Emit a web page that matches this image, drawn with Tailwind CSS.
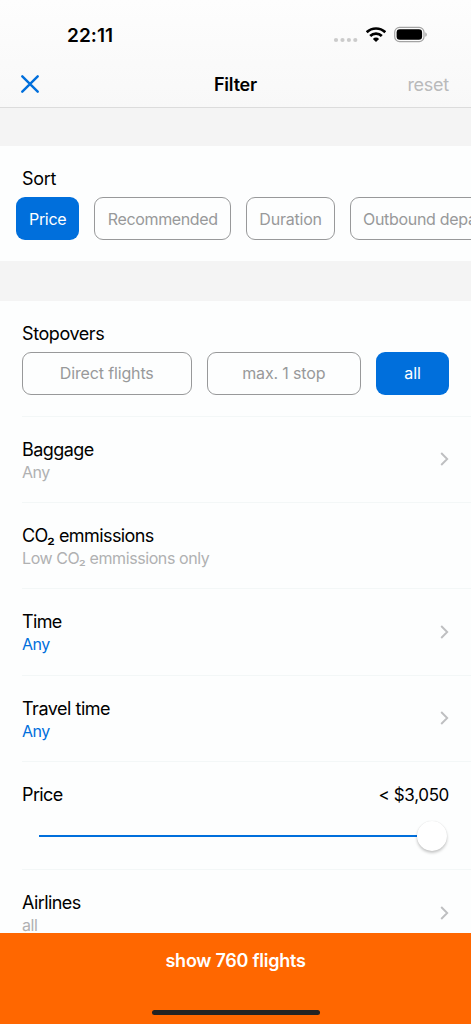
<!DOCTYPE html>
<html lang="en">
<head>
<meta charset="utf-8">
<meta name="viewport" content="width=device-width, initial-scale=1">
<title>Filter</title>
<script src="https://cdn.jsdelivr.net/npm/@tailwindcss/browser@4"></script>
</head>
<body class="h-[1024px] w-[471px] overflow-hidden bg-[#fdfefe] font-['Inter','Liberation_Sans',sans-serif] text-black">
<div class="flex h-[1024px] w-[471px] flex-col overflow-hidden">
  <header class="h-[108px] shrink-0 border-b border-[#dcdcdc] bg-linear-to-b from-[#fdfdfd] to-[#f8f8f8]">
    <div class="flex h-[61px] items-start justify-between pt-[24px] pr-[43px] pl-[67px]">
      <span class="text-[19px] leading-[23px] font-semibold tracking-[0.05px]">22:11</span>
      <div class="flex items-center">
        <svg class="mt-[10px] mr-[7px]" width="26" height="6" viewBox="0 0 26 6" fill="#cbcbcb"><circle cx="3" cy="3" r="2.1"/><circle cx="9.5" cy="3" r="2.1"/><circle cx="15.9" cy="3" r="2.1"/><circle cx="22.3" cy="3" r="2.1"/></svg>
        <svg class="mr-[8px]" width="20" height="21" viewBox="0 0 20 21"><g fill="none" stroke="#000" stroke-width="2.7"><path d="M.7 8.3a13.3 13.3 0 0 1 18.6 0"/><path d="M4.2 12a8.2 8.2 0 0 1 11.6 0"/></g><path d="M10 18 6.9 14.9a4.4 4.4 0 0 1 6.2 0z"/></svg>
        <svg width="34" height="21" viewBox="0 0 34 21"><rect x=".7" y="3.4" width="29.3" height="14.2" rx="4.8" fill="none" stroke="#a3a3a3" stroke-width="1.2"/><rect x="2.6" y="5.2" width="25.5" height="10.6" rx="3.2"/><path d="M31.3 8.2c2 .9 2 3.7 0 4.6z" fill="#a3a3a3"/></svg>
      </div>
    </div>
    <div class="grid h-[46px] grid-cols-3 items-center px-[22px]">
      <svg class="-ml-px" width="18" height="18" viewBox="0 0 18 18" fill="none" stroke="#006fdc" stroke-width="2.4" stroke-linecap="round"><path d="m1.3 1.3 15.4 15.4M16.7 1.3 1.3 16.7"/></svg>
      <h1 class="pt-px text-center text-[18px] leading-[22px] font-semibold tracking-[-0.2px]">Filter</h1>
      <span class="pt-px text-right text-[18px] leading-[22px] tracking-[-0.25px] text-[#b9babb]">reset</span>
    </div>
  </header>
  <div class="h-[38px] shrink-0 bg-[#f4f4f4]"></div>
  <section class="h-[115px] shrink-0 pt-[22px]">
    <h2 class="ml-[22px] text-[18px] leading-[22px] tracking-[-0.3px]">Sort</h2>
    <div class="mt-[7px] ml-[16px] flex w-[600px] gap-[15px] text-[16px] text-[#98999a]">
      <div class="flex h-[43px] w-[63.3px] shrink-0 items-center justify-center rounded-[9px] bg-[#006fdc] tracking-[-0.3px] text-white">Price</div>
      <div class="flex h-[43px] w-[136.9px] shrink-0 items-center justify-center rounded-[9px] border border-[#98999a] tracking-[-0.35px]">Recommended</div>
      <div class="flex h-[43px] w-[88.8px] shrink-0 items-center justify-center rounded-[9px] border border-[#98999a] tracking-[-0.2px]">Duration</div>
      <div class="flex h-[43px] w-[174px] shrink-0 items-center rounded-[9px] border border-[#98999a] pl-[12px] tracking-[-0.3px] whitespace-nowrap">Outbound departure</div>
    </div>
  </section>
  <div class="h-[39.5px] shrink-0 bg-[#f4f4f4]"></div>
  <main class="flex h-[632px] shrink-0 flex-col overflow-hidden pl-[22px]">
    <section class="h-[116.2px] shrink-0 border-b border-[#f3f7f7] pt-[22px]">
      <h2 class="text-[18px] leading-[22px] tracking-[-0.42px]">Stopovers</h2>
      <div class="mt-[7px] flex gap-[15px] text-[16px] tracking-[-0.15px] text-[#98999a]">
        <div class="flex h-[43px] w-[169.5px] items-center justify-center rounded-[9px] border border-[#98999a]"><span>Direct flights</span></div>
        <div class="flex h-[43px] w-[154.5px] items-center justify-center rounded-[9px] border border-[#98999a]">max. 1 stop</div>
        <div class="flex h-[43px] w-[73px] items-center justify-center rounded-[9px] bg-[#006fdc] text-white">all</div>
      </div>
    </section>
    <section class="flex h-[86.3px] shrink-0 items-center justify-between border-b border-[#f3f7f7] pr-[22px]">
      <div class="pt-[2px]"><h2 class="text-[18px] leading-[23px] tracking-[-0.55px]">Baggage</h2><p class="text-[16px] leading-[22px] tracking-[-0.5px] text-[#b0b1b2]">Any</p></div>
      <svg width="9" height="14" viewBox="0 0 9 14" fill="none" stroke="#bebfc1" stroke-width="1.9"><path d="m1.2 1 6 6-6 6"/></svg>
    </section>
    <section class="flex h-[86.3px] shrink-0 items-center border-b border-[#f3f7f7]">
      <div class="pt-[2px]"><h2 class="text-[18px] leading-[23px] tracking-[-0.58px]">CO₂ emmissions</h2><p class="text-[16px] leading-[22px] tracking-[-0.41px] text-[#b0b1b2]">Low CO₂ emmissions only</p></div>
    </section>
    <section class="flex h-[86.3px] shrink-0 items-center justify-between border-b border-[#f3f7f7] pr-[22px]">
      <div class="pt-[2px]"><h2 class="text-[18px] leading-[23px] tracking-[-0.65px]">Time</h2><p class="text-[16px] leading-[22px] tracking-[-0.5px] text-[#006fdc]">Any</p></div>
      <svg width="9" height="14" viewBox="0 0 9 14" fill="none" stroke="#bebfc1" stroke-width="1.9"><path d="m1.2 1 6 6-6 6"/></svg>
    </section>
    <section class="flex h-[86.3px] shrink-0 items-center justify-between border-b border-[#f3f7f7] pr-[22px]">
      <div class="pt-[2px]"><h2 class="text-[18px] leading-[23px] tracking-[-0.48px]">Travel time</h2><p class="text-[16px] leading-[22px] tracking-[-0.5px] text-[#006fdc]">Any</p></div>
      <svg width="9" height="14" viewBox="0 0 9 14" fill="none" stroke="#bebfc1" stroke-width="1.9"><path d="m1.2 1 6 6-6 6"/></svg>
    </section>
    <section class="h-[107.8px] shrink-0 border-b border-[#f3f7f7] pt-[22px] pr-[22px]">
      <div class="flex justify-between text-[18px] leading-[22px]"><h2 class="tracking-[-0.6px]">Price</h2><span class="text-[17px] tracking-[-0.35px]">&lt; $3,050</span></div>
      <div class="mt-[15px] ml-[17px] flex h-[30px] items-center">
        <div class="h-[2px] w-[378px] bg-[#006fdc]"></div>
        <div class="size-[30px] rounded-full bg-white shadow-[0_2px_3px_rgba(0,0,0,0.22),0_0_1px_rgba(0,0,0,0.12)]"></div>
      </div>
    </section>
    <section class="flex h-[86.3px] shrink-0 items-center justify-between pr-[22px]">
      <div class="pt-[2px]"><h2 class="text-[18px] leading-[23px] tracking-[-0.58px]">Airlines</h2><p class="text-[16px] leading-[22px] tracking-[-0.4px] text-[#b0b1b2]">all</p></div>
      <svg width="9" height="14" viewBox="0 0 9 14" fill="none" stroke="#bebfc1" stroke-width="1.9"><path d="m1.2 1 6 6-6 6"/></svg>
    </section>
  </main>
  <footer class="flex grow flex-col items-center bg-[#ff6700] pt-[17px]">
    <span class="text-[18px] leading-[22px] font-semibold tracking-[-0.25px] text-white">show 760 flights</span>
    <div class="mt-[38px] h-[5px] w-[168px] rounded-full bg-[#232323]"></div>
  </footer>
</div>
</body>
</html>
